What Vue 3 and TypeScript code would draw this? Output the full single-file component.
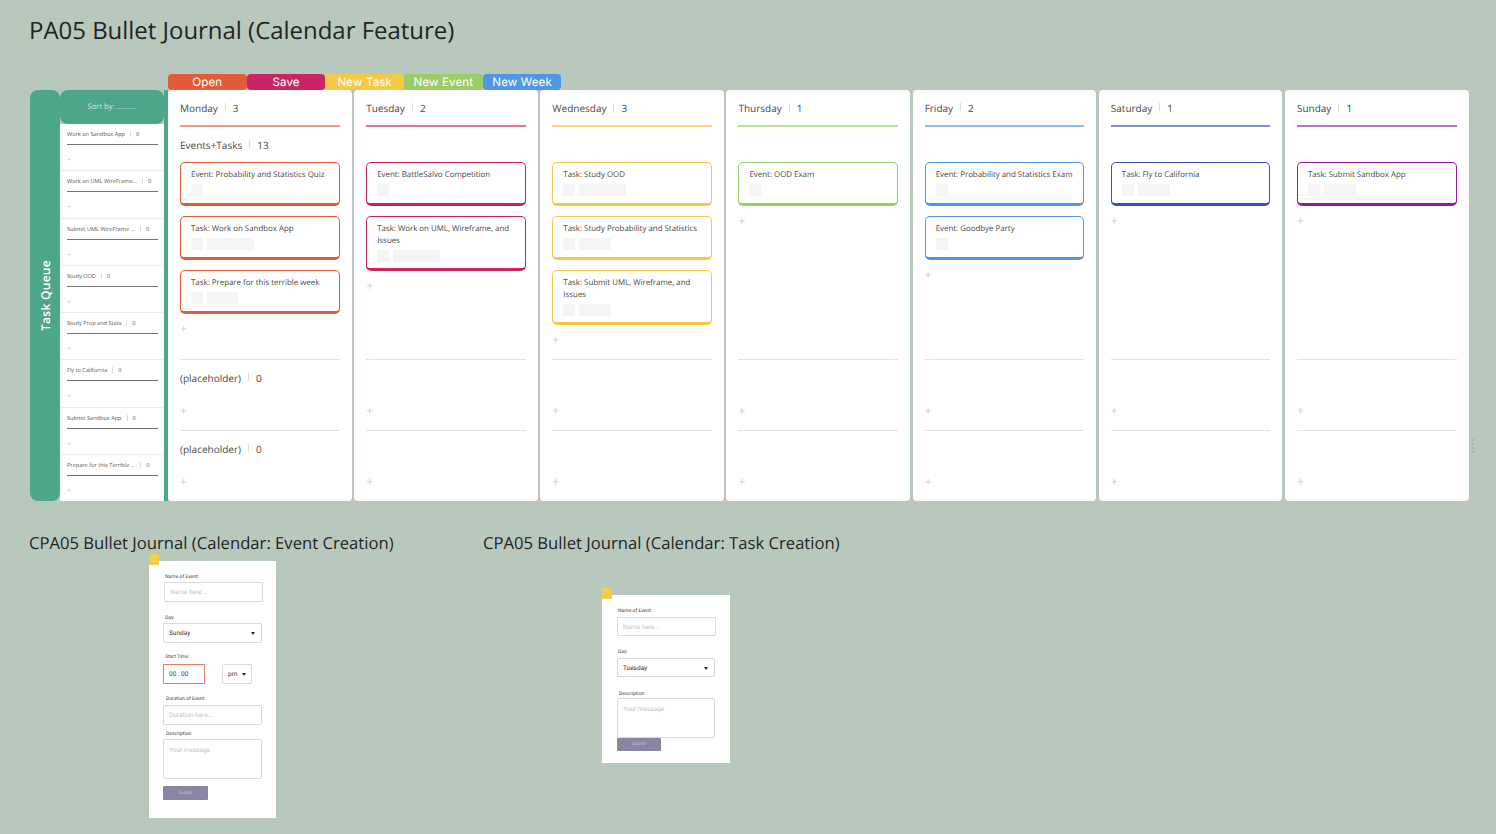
<script setup lang="ts">
interface Card { title: string; chip?: number }
interface Day { name: string; count: number; color: string; line: string; cards: Card[] }

const actions = [
  { label: 'Open', color: '#e25a38' },
  { label: 'Save', color: '#c92563' },
  { label: 'New Task', color: '#f4c945' },
  { label: 'New Event', color: '#9ccc65' },
  { label: 'New Week', color: '#4f97e4' },
]

const queue = [
  'Work on Sandbox App',
  'Work on UML WireFrame...',
  'Submit UML WireFrame ...',
  'Study OOD',
  'Study Prop and Stats',
  'Fly to California',
  'Submit Sandbox App',
  'Prepare for this Terrible ...',
]

const days: Day[] = [
  { name: 'Monday', count: 3, color: '#e25a38', line: '#ee9a84', cards: [
    { title: 'Event: Probability and Statistics Quiz' },
    { title: 'Task: Work on Sandbox App', chip: 47 },
    { title: 'Task: Prepare for this terrible week', chip: 31 },
  ] },
  { name: 'Tuesday', count: 2, color: '#c92563', line: '#e2719b', cards: [
    { title: 'Event: BattleSalvo Competition' },
    { title: 'Task: Work on UML, Wireframe, and Issues', chip: 47 },
  ] },
  { name: 'Wednesday', count: 3, color: '#f4c945', line: '#f8dc7c', cards: [
    { title: 'Task: Study OOD', chip: 47 },
    { title: 'Task: Study Probability and Statistics', chip: 32 },
    { title: 'Task: Submit UML, Wireframe, and Issues', chip: 32 },
  ] },
  { name: 'Thursday', count: 1, color: '#9ccc65', line: '#bfe095', cards: [
    { title: 'Event: OOD Exam' },
  ] },
  { name: 'Friday', count: 2, color: '#4f97e4', line: '#8cbcee', cards: [
    { title: 'Event: Probability and Statistics Exam' },
    { title: 'Event: Goodbye Party' },
  ] },
  { name: 'Saturday', count: 1, color: '#3f4fb0', line: '#8490d0', cards: [
    { title: 'Task: Fly to California', chip: 32 },
  ] },
  { name: 'Sunday', count: 1, color: '#8e1ba0', line: '#bd6fca', cards: [
    { title: 'Task: Submit Sandbox App', chip: 32 },
  ] },
]
</script>

<template>
  <div class="page">
    <h1 class="title">PA05 Bullet Journal (Calendar Feature)</h1>

    <div class="actions">
      <button v-for="a in actions" :key="a.label" class="action" :style="{ background: a.color }">{{ a.label }}</button>
    </div>

    <div class="board">
      <div class="rail"><span>Task Queue</span></div>

      <aside class="queue">
        <div class="sort">Sort by: ..........</div>
        <div v-for="q in queue" :key="q" class="q-item">
          <div class="q-head">
            <span>{{ q }}</span><i class="q-sep"></i><span>0</span>
          </div>
          <div class="q-line"></div>
          <div class="q-plus">+</div>
        </div>
      </aside>

      <section v-for="(d, i) in days" :key="d.name" class="day">
        <div class="lane main">
          <div class="day-head" :style="{ borderColor: d.line }">
            <span>{{ d.name }}</span><i class="sep"></i><span>{{ d.count }}</span>
          </div>
          <div class="group-head">
            <template v-if="i === 0"><span>Events+Tasks</span><i class="sep"></i><span>13</span></template>
          </div>
          <div class="cards">
            <article
              v-for="c in d.cards"
              :key="c.title"
              class="card"
              :style="{ borderColor: d.color }"
            >
              <p>{{ c.title }}</p>
              <div class="chips">
                <b class="chip"></b>
                <b v-if="c.chip" class="chip" :style="{ width: c.chip + 'px' }"></b>
              </div>
            </article>
          </div>
          <div class="plus">+</div>
        </div>

        <div v-for="n in 2" :key="n" class="lane extra">
          <div class="group-head slim">
            <template v-if="i === 0"><span>(placeholder)</span><i class="sep"></i><span>0</span></template>
          </div>
          <div class="plus">+</div>
        </div>
      </section>

      <div class="handle"></div>
    </div>

    <div class="lower">
      <div class="block first">
        <h2 class="sub">CPA05 Bullet Journal (Calendar: Event Creation)</h2>
        <form class="form form-event" @submit.prevent>
          <i class="sticker"></i>
          <label class="lbl">Name of Event:</label>
          <div class="field ph name-shift">Name here...</div>
          <label class="lbl l-day">Day:</label>
          <div class="field sel">Sunday<i class="caret"></i></div>
          <label class="lbl l-start">Start Time:</label>
          <div class="time-row">
            <div class="field time">00 : 00</div>
            <div class="field sel pm">pm<i class="caret"></i></div>
          </div>
          <label class="lbl l-dur">Duration of Event:</label>
          <div class="field ph dur">Duration here...</div>
          <label class="lbl l-desc">Description</label>
          <div class="field ph area">Your message</div>
          <div class="submit">Submit</div>
        </form>
      </div>

      <div class="block second">
        <h2 class="sub">CPA05 Bullet Journal (Calendar: Task Creation)</h2>
        <form class="form form-task" @submit.prevent>
          <i class="sticker"></i>
          <label class="lbl">Name of Event:</label>
          <div class="field ph t-field t-name">Name here...</div>
          <label class="lbl l-day">Day:</label>
          <div class="field sel t-field">Tuesday<i class="caret"></i></div>
          <label class="lbl l-desc2">Description</label>
          <div class="field ph area t-area">Your message</div>
          <div class="submit flush">Submit</div>
        </form>
      </div>
    </div>
  </div>
</template>

<style>
html, body { margin: 0; background: #b9c8bd; }
</style>

<style scoped>
.page {
  width: 1496px;
  height: 834px;
  box-sizing: border-box;
  padding: 14px 0 0 30px;
  background: #b9c8bd;
  font-family: "Open Sans", "Noto Sans", sans-serif;
  color: #444;
  overflow: hidden;
  text-rendering: geometricPrecision;
}
.title {
  margin: 0 0 0 -1px;
  font-size: 23.95px;
  line-height: 33px;
  font-weight: 400;
  color: #1f2522;
}
.actions {
  display: flex;
  margin: 27px 0 0 138px;
  height: 16px;
}
.action {
  width: 78.7px;
  height: 16px;
  padding: 0;
  border: 0;
  border-radius: 4px;
  color: #fff;
  font-family: Inter, "Open Sans", sans-serif;
  font-size: 11.6px;
  letter-spacing: 0.1px;
  line-height: 16px;
  text-rendering: geometricPrecision;
}
.board {
  position: relative;
  display: flex;
  height: 411px;
  width: 1440px;
  gap: 2.47px;
}
.rail {
  width: 30px;
  margin-right: -2.47px;
  flex: none;
  background: #4da58a;
  border-radius: 8px;
  display: flex;
  align-items: center;
  justify-content: center;
}
.rail span {
  writing-mode: vertical-rl;
  transform: rotate(180deg);
  color: #fff;
  font-size: 12px;
  font-weight: 600;
  letter-spacing: 0.3px;
  white-space: nowrap;
  margin-top: 1px;
}
.queue {
  width: 108px;
  margin-right: -2.47px;
  flex: none;
  box-sizing: border-box;
  border-right: 4px solid #4da58a;
  display: flex;
  flex-direction: column;
}
.sort {
  height: 34px;
  flex: none;
  border-radius: 8px;
  background: #4da58a;
  display: flex;
  align-items: center;
  justify-content: center;
  color: #d6ebe2;
  font-size: 7.6px;
}
.q-item {
  height: 47.3px;
  flex: none;
  box-sizing: border-box;
  padding: 0 6px 0 7px;
  background: #fff;
  border-bottom: 1px solid #eee;
  display: flex;
  flex-direction: column;
}
.q-item:last-child { border-bottom: 0; height: 45.9px; }
.q-head {
  display: flex;
  align-items: center;
  height: 20px;
  font-size: 5.6px;
  color: #555;
  white-space: nowrap;
}
.q-sep {
  width: 1px;
  height: 6px;
  margin: 0 5px;
  background: #ddd;
}
.q-line { height: 1px; background: #777; }
.q-plus {
  margin-top: 11px;
  font-size: 7px;
  line-height: 10px;
  color: #ccc;
}
.day {
  width: 183.7px;
  flex: none;
  box-sizing: border-box;
  padding: 0 12px;
  background: #fff;
  border-radius: 4px;
  display: flex;
  flex-direction: column;
}
.lane { display: flex; flex-direction: column; box-sizing: border-box; flex: none; }
.main { height: 270px; border-bottom: 1px solid #e3e3e3; }
.extra { height: 71px; border-bottom: 1px solid #e3e3e3; }
.extra:last-child { border-bottom: 0; height: 70px; }
.day-head {
  height: 37px;
  flex: none;
  display: flex;
  align-items: center;
  border-bottom: 2px solid;
  font-size: 10px;
  color: #4a4a4a;
  box-sizing: border-box;
}
.sep {
  width: 1px;
  height: 8px;
  margin: 0 7px 2px;
  background: #ddd;
}
.group-head {
  height: 35px;
  flex: none;
  display: flex;
  align-items: center;
  font-size: 10px;
  color: #4a4a4a;
}
.group-head.slim { height: 36px; }
.cards { display: flex; flex-direction: column; gap: 10px; }
.card {
  box-sizing: border-box;
  padding: 6px 9px 6px 10px;
  border: 1px solid;
  border-bottom-width: 3px;
  border-radius: 5px;
  background: #fff;
  min-height: 44px;
}
.card p {
  margin: 0;
  font-size: 7.9px;
  line-height: 12px;
  color: #4a4a4a;
}
.chips { display: flex; gap: 4px; margin-top: 3px; }
.chip {
  display: block;
  width: 12px;
  height: 12px;
  background: #f5f5f5;
}
.plus {
  margin-top: 7.5px;
  height: 14px;
  line-height: 14px;
  font-size: 12px;
  color: #cfcfcf;
}
.handle {
  position: absolute;
  left: 1442px;
  top: 348px;
  width: 2px;
  height: 17px;
  background-image: radial-gradient(circle, #a3b3a8 0.7px, transparent 0.8px);
  background-size: 2px 4px;
}
.lower {
  display: flex;
  margin-top: 31px;
}
.block { flex: none; }
.first { width: 454px; }
.sub {
  margin: 0 0 0 -1px;
  font-size: 16.65px;
  line-height: 22px;
  font-weight: 400;
  color: #1f2522;
  white-space: nowrap;
}
.form {
  position: relative;
  box-sizing: border-box;
  background: #fff;
  display: flex;
  flex-direction: column;
  align-items: flex-start;
  font-family: Roboto, "Liberation Sans", sans-serif;
}
.form-event {
  width: 127px;
  height: 257px;
  margin: 7px 0 0 119px;
  padding: 12px 14px 0 14px;
}
.form-task {
  width: 128px;
  height: 168px;
  margin: 41px 0 0 118px;
  padding: 12px 14px 0 15px;
}
.sticker {
  position: absolute;
  left: 0;
  top: -7px;
  width: 10px;
  height: 11px;
  background: #f0cf4c;
}
.lbl {
  display: block;
  margin-left: 2px;
  height: 6px;
  line-height: 8px;
  font-size: 5px;
  color: #444;
}
.field {
  box-sizing: border-box;
  width: 99px;
  height: 20px;
  margin-top: 3px;
  padding: 0 5px;
  border: 1px solid #dadada;
  border-radius: 1px;
  display: flex;
  align-items: center;
  font-size: 6.5px;
  color: #333;
  background: #fff;
}
.ph { color: #c4c4c4; }
.name-shift { margin-left: 1px; }
.sel { position: relative; }
.caret {
  position: absolute;
  right: 6px;
  top: 8px;
  border: 2px solid transparent;
  border-top: 3px solid #2b2456;
  border-bottom: 0;
}
.l-day { margin-top: 12px; }
.l-start { margin-top: 10px; }
.time-row { display: flex; gap: 17px; margin-top: 5px; }
.time { width: 42px; border-color: #e57b62; margin: 0; }
.pm { width: 30px; margin: 0; }
.pm .caret { right: 5px; }
.l-dur { margin-top: 11px; margin-left: 3px; }
.dur { height: 20px; margin-top: 4px; }
.l-desc { margin-top: 5px; margin-left: 3px; }
.area { height: 40px; align-items: flex-start; padding-top: 6px; border-radius: 2px; }
.l-desc2 { margin-top: 13px; margin-left: 2px; }
.t-field { margin-top: 4px; height: 19px; width: 98px; }
.t-name { width: 99px; }
.t-area { margin-top: 2px; width: 98px; }
.form-task .lbl { margin-left: 1px; }
.form-task .l-desc2 { margin-left: 2px; }
.submit {
  width: 45px;
  height: 14px;
  margin-top: 7px;
  background: #8886a3;
  border-radius: 1px;
  color: #c4c3d2;
  font-size: 4.5px;
  display: flex;
  align-items: center;
  justify-content: center;
}
.submit.flush { margin-top: 0; height: 13px; width: 44px; }
</style>
